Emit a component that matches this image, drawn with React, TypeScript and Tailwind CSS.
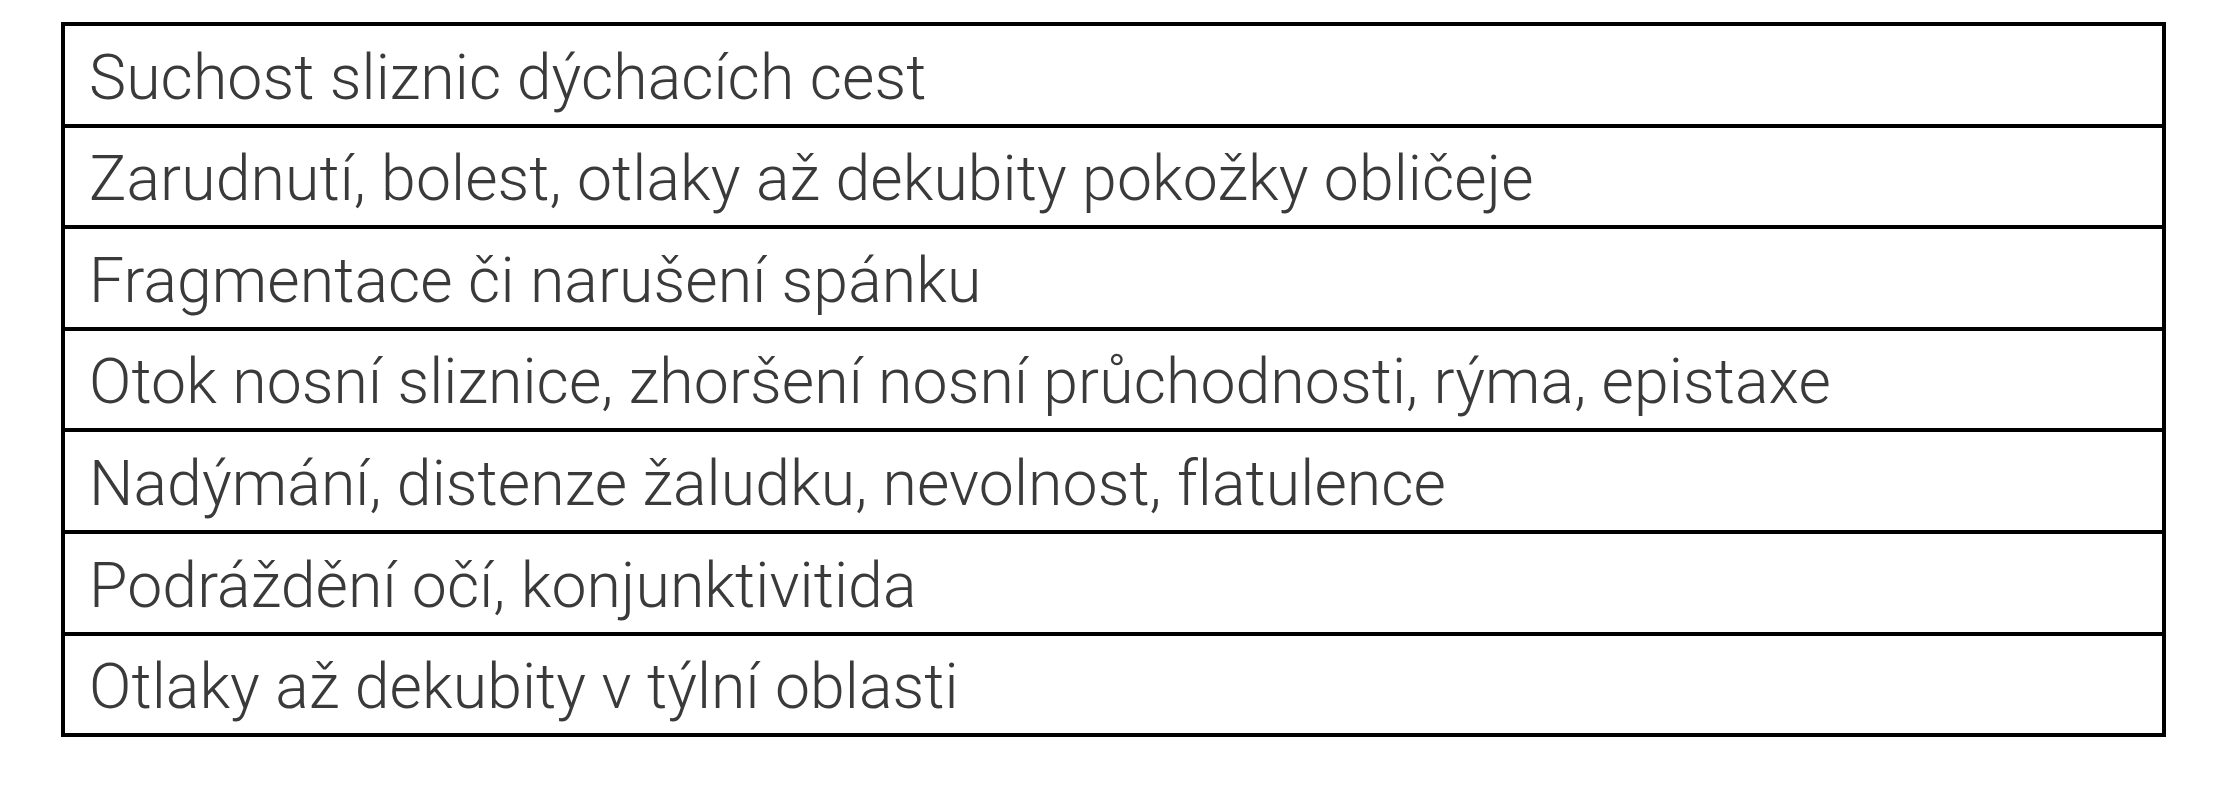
const rows: string[] = [
  "Suchost sliznic dýchacích cest",
  "Zarudnutí, bolest, otlaky až dekubity pokožky obličeje",
  "Fragmentace či narušení spánku",
  "Otok nosní sliznice, zhoršení nosní průchodnosti, rýma, epistaxe",
  "Nadýmání, distenze žaludku, nevolnost, flatulence",
  "Podráždění očí, konjunktivitida",
  "Otlaky až dekubity v týlní oblasti",
];

export default function App() {
  return (
    <div className="h-[800px] w-[2235px] bg-white pt-[22px] pl-[61px]">
      <div className="w-[2105px] border-4 border-b-0 border-black">
        {rows.map((row) => (
          <div
            key={row}
            className="flex h-[101.6px] items-center border-b-4 border-black pt-[6px] pl-[24px] font-['Roboto',sans-serif] text-[62.5px] leading-none font-light tracking-[0.1px] text-[#3a3a3a]"
          >
            {row}
          </div>
        ))}
      </div>
    </div>
  );
}
